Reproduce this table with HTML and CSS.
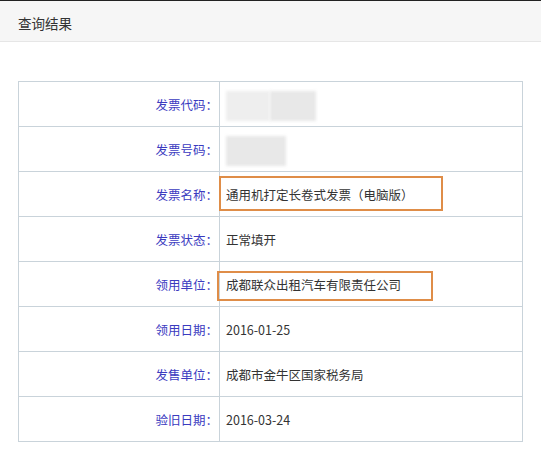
FILE: index.html
```html
<!DOCTYPE html>
<html lang="zh-CN">
<head>
<meta charset="utf-8">
<title>查询结果</title>
<link rel="stylesheet" href="styles.css">
</head>
<body>
<div class="topline"></div>
<header class="head">查询结果</header>
<table class="result">
  <tr>
    <td class="label">发票代码<span class="colon">：</span></td>
    <td class="value"><span class="blur blur-a"></span><span class="blur blur-a1"></span></td>
  </tr>
  <tr>
    <td class="label">发票号码<span class="colon">：</span></td>
    <td class="value"><span class="blur blur-b"></span></td>
  </tr>
  <tr>
    <td class="label">发票名称<span class="colon">：</span></td>
    <td class="value">通用机打定长卷式发票<span class="jp">（</span>电脑版<span class="jp">）</span><span class="mark mark-1"></span></td>
  </tr>
  <tr>
    <td class="label">发票状态<span class="colon">：</span></td>
    <td class="value">正常填开</td>
  </tr>
  <tr>
    <td class="label">领用单位<span class="colon">：</span></td>
    <td class="value">成都联众出租汽车有限责任公司<span class="mark mark-2"></span></td>
  </tr>
  <tr>
    <td class="label">领用日期<span class="colon">：</span></td>
    <td class="value">2016-01-25</td>
  </tr>
  <tr>
    <td class="label">发售单位<span class="colon">：</span></td>
    <td class="value">成都市金牛区国家税务局</td>
  </tr>
  <tr>
    <td class="label">验旧日期<span class="colon">：</span></td>
    <td class="value">2016-03-24</td>
  </tr>
</table>
</body>
</html>
```
FILE: styles.css
```css
html, body {
  margin: 0;
  padding: 0;
  background: #fff;
}
body {
  font-family: "Noto Sans CJK SC", "Noto Sans", sans-serif;
  color: #333;
}
.topline {
  height: 1px;
  background: #222;
}
.head {
  height: 40px;
  line-height: 44px;
  padding-left: 18px;
  background: #f6f6f6;
  border-bottom: 1px solid #e6e6e6;
  font-size: 13.5px;
  color: #333;
}
.result {
  margin: 39px 0 0 18px;
  width: 505px;
  border-collapse: collapse;
  border: 1px solid #c9d3da;
  font-size: 12.5px;
}
.result td {
  height: 44px;
  border-top: 1px solid #c9d3da;
  border-bottom: 1px solid #c9d3da;
  padding: 0;
  vertical-align: middle;
}
.label {
  width: 199px;
  text-align: right;
  color: #3b3bbf;
  border-right: 1px solid #c9d3da;
  padding-right: 1px !important;
}
.colon, .jp {
  font-family: "Noto Sans CJK JP", sans-serif;
}
.value {
  position: relative;
  padding-left: 6px !important;
  color: #333;
}
.blur {
  position: absolute;
  background: #e8e8e8;
  filter: blur(1.5px);
}
.blur-a {
  left: 50px;
  top: 9px;
  width: 46px;
  height: 30px;
}
.blur-a1 {
  left: 6px;
  top: 9px;
  width: 44px;
  height: 30px;
  background: #eeeeee;
}
.blur-b {
  left: 6px;
  top: 9px;
  width: 60px;
  height: 30px;
}
.mark {
  position: absolute;
  border: 2px solid #df8d48;
  box-sizing: border-box;
}
.mark-1 {
  left: -1px;
  top: 4px;
  width: 224px;
  height: 35px;
}
.mark-2 {
  left: -3px;
  top: 9px;
  width: 216px;
  height: 30px;
}
```
